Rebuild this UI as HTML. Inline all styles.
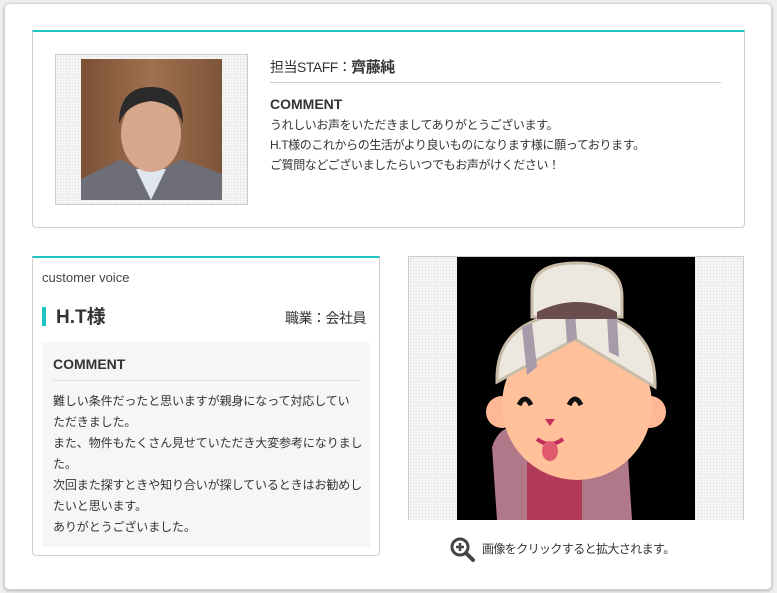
<!DOCTYPE html>
<html><head><meta charset="utf-8"><style>
*{margin:0;padding:0;box-sizing:border-box}
body{width:777px;height:593px;background:#f0f0f0;font-family:"Liberation Sans","Noto Sans CJK JP",sans-serif;color:#333;position:relative;overflow:hidden}
.card{position:absolute;left:4px;top:3px;width:768px;height:587px;background:#fff;border:1px solid #d4d4d4;border-radius:5px;box-shadow:0 1px 3px rgba(0,0,0,.25)}
.abs{position:absolute}
.dots{background-color:#f4f4f4;background-image:radial-gradient(#ddd 0.6px,transparent 0.8px);background-size:3px 3px}
.top{left:32px;top:30px;width:713px;height:198px;border:1px solid #ccc;border-top:2px solid #21c4c4;border-radius:0 0 4px 4px;background:#fff}
.t{font-size:12px;line-height:20px;white-space:nowrap}
</style></head><body>
<div class="card"></div>
<div class="abs top"></div>
<div class="abs dots" style="left:55px;top:54px;width:193px;height:151px;border:1px solid #ccc"></div>
<svg class="abs" style="left:81px;top:59px" width="141" height="141" viewBox="0 0 141 141">
<defs><linearGradient id="g" x1="0" y1="0" x2="1" y2="0"><stop offset="0" stop-color="#7b5033"/><stop offset=".5" stop-color="#a07050"/><stop offset="1" stop-color="#7d5538"/></linearGradient></defs>
<rect width="141" height="141" fill="url(#g)"/>
<path d="M0 120 L40 100 L70 118 L100 100 L141 115 L141 141 L0 141Z" fill="#6e6e78"/>
<path d="M55 110 L70 141 L85 110Z" fill="#dfe6f0"/>
<ellipse cx="70" cy="75" rx="30" ry="38" fill="#d6a78c"/>
<path d="M38 65 Q38 28 70 28 Q102 28 102 65 Q96 45 70 42 Q45 45 38 65Z" fill="#2a2a2a"/>
</svg>
<div class="abs t" style="left:270px;top:57px;font-size:14px;letter-spacing:-0.5px">担当STAFF：<b style="font-size:15px">齊藤純</b></div>
<div class="abs" style="left:270px;top:82px;width:451px;height:1px;background:#ccc"></div>
<div class="abs t" style="left:270px;top:94px;font-weight:bold;font-size:14px">COMMENT</div>
<div class="abs t" style="left:270px;top:115px;letter-spacing:-0.4px">うれしいお声をいただきましてありがとうございます。<br>H.T様のこれからの生活がより良いものになります様に願っております。<br>ご質問などございましたらいつでもお声がけください！</div>

<div class="abs" style="left:32px;top:256px;width:348px;height:300px;border:1px solid #ccc;border-top:2px solid #21c4c4;border-radius:0 0 4px 4px;background:#fff"></div>
<div class="abs t" style="left:42px;top:268px;font-size:13px;color:#444">customer voice</div>
<div class="abs" style="left:42px;top:307px;width:4px;height:19px;background:#21c4c4"></div>
<div class="abs t" style="left:56px;top:306px;font-size:19px;font-weight:bold;line-height:24px">H.T様</div>
<div class="abs t" style="left:285px;top:308px;font-size:14px;letter-spacing:-0.5px">職業：会社員</div>
<div class="abs" style="left:42px;top:342px;width:328px;height:205px;background:#f6f6f6"></div>
<div class="abs t" style="left:53px;top:354px;font-weight:bold;font-size:14px">COMMENT</div>
<div class="abs" style="left:53px;top:380px;width:307px;border-top:1px dotted #ccc"></div>
<div class="abs t" style="left:53px;top:391px;line-height:21px;letter-spacing:-0.1px">難しい条件だったと思いますが親身になって対応してい<br>ただきました。<br>また、物件もたくさん見せていただき大変参考になりまし<br>た。<br>次回また探すときや知り合いが探しているときはお勧めし<br>たいと思います。<br>ありがとうございました。</div>

<div class="abs dots" style="left:408px;top:256px;width:336px;height:264px;border:1px solid #ccc;border-bottom:none"></div>
<svg class="abs" style="left:457px;top:257px" width="238" height="263" viewBox="0 0 238 263">
<rect width="238" height="263" fill="#000"/>
<path d="M40 263 L35 190 Q45 160 75 175 L170 185 L175 263Z" fill="#b07888"/>
<rect x="70" y="205" width="55" height="58" fill="#b03a58"/>
<circle cx="45" cy="155" r="16" fill="#ffb896"/>
<circle cx="193" cy="155" r="16" fill="#ffb896"/>
<circle cx="120" cy="148" r="75" fill="#ffc09a"/>
<path d="M40 125 Q38 60 120 55 Q200 60 198 130 L118 82Z" fill="#ece8e0" stroke="#c8bca8" stroke-width="3"/>
<path d="M65 70 L70 118 L80 110 L75 66Z M108 58 L110 86 L120 82 L118 56Z M150 60 L152 95 L162 100 L160 62Z" fill="#a89aa8"/>
<path d="M75 35 Q75 6 120 6 Q165 6 165 40 L165 60 L75 60Z" fill="#ece8e0" stroke="#c8bca8" stroke-width="3"/>
<path d="M80 55 Q120 35 160 55 L160 62 L80 62Z" fill="#6a4e4e"/>
<path d="M62 148 Q68 136 74 148 M112 148 Q118 136 124 148" stroke="#111" stroke-width="5" fill="none"/>
<path d="M88 162 L98 162 L93 169Z" fill="#c0305a"/>
<path d="M80 182 Q93 192 106 182" stroke="#c0305a" stroke-width="4" fill="none"/>
<ellipse cx="93" cy="194" rx="8" ry="10" fill="#e05a70"/>
</svg>
<svg class="abs" style="left:449px;top:536px" width="27" height="27" viewBox="0 0 27 27">
<circle cx="11" cy="11" r="8" fill="none" stroke="#444" stroke-width="3"/>
<path d="M17 17 L24 24" stroke="#444" stroke-width="4" stroke-linecap="round"/>
<path d="M7 11 H15 M11 7 V15" stroke="#444" stroke-width="2.5"/>
</svg>
<div class="abs t" style="left:482px;top:539px;letter-spacing:-0.6px">画像をクリックすると拡大されます。</div>
</body></html>
